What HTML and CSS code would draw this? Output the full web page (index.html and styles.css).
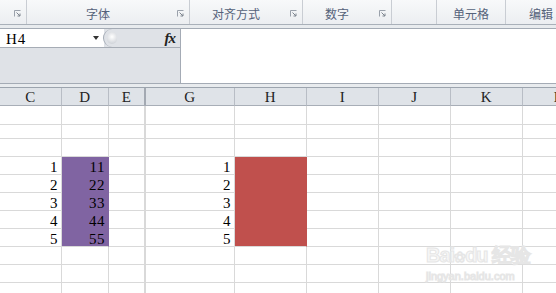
FILE: index.html
```html
<!DOCTYPE html>
<html>
<head>
<meta charset="utf-8">
<link rel="stylesheet" href="styles.css">
</head>
<body>
<div class="ribbon">
  <div class="grp g0"><span class="lbl"></span><span class="launch"><svg width="7" height="7" viewBox="0 0 7 7"><path d="M0.5 6.5V0.5H6.5" fill="none" stroke="#9aa1ab"/><path d="M2.5 2.5L6 6M6 3.5V6H3.5" fill="none" stroke="#7d848e"/></svg></span></div>
  <div class="grp g1"><span class="lbl">字体</span><span class="launch"><svg width="7" height="7" viewBox="0 0 7 7"><path d="M0.5 6.5V0.5H6.5" fill="none" stroke="#9aa1ab"/><path d="M2.5 2.5L6 6M6 3.5V6H3.5" fill="none" stroke="#7d848e"/></svg></span></div>
  <div class="grp g2"><span class="lbl">对齐方式</span><span class="launch"><svg width="7" height="7" viewBox="0 0 7 7"><path d="M0.5 6.5V0.5H6.5" fill="none" stroke="#9aa1ab"/><path d="M2.5 2.5L6 6M6 3.5V6H3.5" fill="none" stroke="#7d848e"/></svg></span></div>
  <div class="grp g3"><span class="lbl">数字</span><span class="launch"><svg width="7" height="7" viewBox="0 0 7 7"><path d="M0.5 6.5V0.5H6.5" fill="none" stroke="#9aa1ab"/><path d="M2.5 2.5L6 6M6 3.5V6H3.5" fill="none" stroke="#7d848e"/></svg></span></div>
  <div class="grp g4"></div>
  <div class="grp g5"><span class="lbl">单元格</span></div>
  <div class="grp g6"><span class="lbl left">编辑</span></div>
</div>
<div class="band"></div>
<div class="fbar">
  <div class="fleft">
    <div class="ntop">
      <div class="namebox"><span class="name">H4</span><span class="arrow"></span></div>
      <div class="pill"><span class="knob"></span><span class="fx">fx</span></div>
    </div>
  </div>
  <div class="finput"></div>
</div>
<div class="band"></div>
<div class="sheet">
  <div class="row hdr"><div>C</div><div>D</div><div>E</div><div>G</div><div>H</div><div>I</div><div>J</div><div>K</div><div>L</div></div>
  <div class="row h19"><div></div><div></div><div></div><div></div><div></div><div></div><div></div><div></div><div></div></div>
  <div class="row h14"><div></div><div></div><div></div><div></div><div></div><div></div><div></div><div></div><div></div></div>
  <div class="row"><div></div><div></div><div></div><div></div><div></div><div></div><div></div><div></div><div></div></div>
  <div class="row"><div>1</div><div class="pur">11</div><div></div><div>1</div><div class="red"></div><div></div><div></div><div></div><div></div></div>
  <div class="row"><div>2</div><div class="pur">22</div><div></div><div>2</div><div class="red"></div><div></div><div></div><div></div><div></div></div>
  <div class="row"><div>3</div><div class="pur">33</div><div></div><div>3</div><div class="red"></div><div></div><div></div><div></div><div></div></div>
  <div class="row"><div>4</div><div class="pur">44</div><div></div><div>4</div><div class="red"></div><div></div><div></div><div></div><div></div></div>
  <div class="row"><div>5</div><div class="pur last">55</div><div></div><div>5</div><div class="red last"></div><div></div><div></div><div></div><div></div></div>
  <div class="row"><div></div><div></div><div></div><div></div><div></div><div></div><div></div><div></div><div></div></div>
  <div class="row"><div></div><div></div><div></div><div></div><div></div><div></div><div></div><div></div><div></div></div>
  <div class="row"><div></div><div></div><div></div><div></div><div></div><div></div><div></div><div></div><div></div></div>
</div>
<div class="watermark"><div class="wm1">Bai<span class="paw">✿</span>du 经验</div><div class="wm2">jingyan.baidu.com</div></div>
</body>
</html>
```
FILE: styles.css
```css
body {
  margin: 0;
  width: 556px;
  height: 293px;
  overflow: hidden;
  background: #fff;
  font-family: "Liberation Serif", "DejaVu Serif", serif;
  position: relative;
}
.ribbon {
  display: flex;
  height: 24px;
  border-bottom: 1px solid #a9b0b9;
  background: linear-gradient(#f8f9fa, #eceef1);
}
.grp {
  display: flex;
  align-items: center;
  border-right: 1px solid #c9cdd3;
  box-sizing: border-box;
  flex: none;
}
.g0 { width: 27px; }
.g1 { width: 163px; }
.g2 { width: 113px; }
.g3 { width: 89px; }
.g4 { width: 45px; }
.g5 { width: 69px; }
.g6 { flex: 1; border-right: none; }
.lbl {
  flex: 1;
  text-align: center;
  font: 12px "Noto Sans CJK SC", sans-serif;
  color: #55627a;
  padding-top: 3px;
  white-space: nowrap;
}
.lbl.left { text-align: left; padding-left: 23px; }
.launch {
  width: 7px;
  height: 7px;
  margin: 2px 5px 0 8px;
  display: flex;
}
.band {
  height: 3px;
  background: #e8ebee;
}
.fbar {
  display: flex;
  height: 54px;
  border-top: 1px solid #a4abb5;
  border-bottom: 1px solid #a4abb5;
}
.fleft {
  width: 180px;
  border-right: 1px solid #a4abb5;
  background: #dfe2e7;
  display: flex;
  flex-direction: column;
}
.ntop {
  display: flex;
  height: 18px;
  border-bottom: 1px solid #a6acb5;
}
.namebox {
  width: 104px;
  background: #fff;
  display: flex;
  align-items: center;
  justify-content: space-between;
}
.name {
  font-size: 15px;
  color: #000;
  padding-left: 6px;
  line-height: 18px;
  padding-top: 1px;
  letter-spacing: 1px;
}
.arrow {
  width: 0;
  height: 0;
  border-left: 3px solid transparent;
  border-right: 3px solid transparent;
  border-top: 4px solid #333;
  margin-right: 5px;
}
.pill {
  flex: 1;
  display: flex;
  align-items: center;
  justify-content: space-between;
  background: #dfe2e7;
  border-left: 1px solid #a4abb5;
  border-radius: 9px 0 0 9px;
  margin-left: -1px;
}
.knob {
  width: 10px;
  height: 12px;
  border-radius: 6px;
  margin-left: 3px;
  background: radial-gradient(circle at 50% 40%, #ffffff, #d6d9de 70%, #c4c8ce);
}
.fx {
  font: italic bold 15px "Liberation Serif", serif;
  color: #222;
  padding-right: 5px;
  letter-spacing: -1px;
}
.finput {
  flex: 1;
  background: #fff;
}
.sheet {
  width: 556px;
  overflow: hidden;
}
.row {
  display: flex;
  height: 18px;
  width: 600px;
}
.row > div {
  flex: none;
  box-sizing: border-box;
  border-right: 1px solid #d9d9d9;
  border-bottom: 1px solid #d9d9d9;
  font-size: 15px;
  line-height: 14px;
  text-align: right;
  padding-right: 3px;
  display: flex;
  align-items: flex-end;
  justify-content: flex-end;
  color: #000;
  letter-spacing: 0.5px;
}
.row > div:nth-child(1) { width: 62px; }
.row > div:nth-child(2) { width: 47px; }
.row > div:nth-child(3) { width: 37px; border-right-width: 2px; }
.row > div:nth-child(4) { width: 89px; }
.row > div:nth-child(5) { width: 72px; }
.row > div:nth-child(6) { width: 72px; }
.row > div:nth-child(7) { width: 72px; }
.row > div:nth-child(8) { width: 72px; }
.row > div:nth-child(9) { width: 72px; }
.row.h19 { height: 19px; }
.row.h14 { height: 14px; }
.row.hdr {
  height: 18px;
  border-top: 1px solid #9ca4ae;
  background: #dfe3e8;
}
.row.hdr > div {
  border-right-color: #b8bdc5;
  border-bottom-color: #a8aeb7;
  justify-content: center;
  align-items: center;
  padding: 1px 0 0 0;
  line-height: 16px;
  color: #222;
}
.row.hdr > div:nth-child(3) { border-right-color: #a3a9b2; }
.row > div.pur {
  background: #8064a2;
  border-right-color: #8064a2;
  border-bottom-color: #8064a2;
}
.row > div.red {
  background: #c0504d;
  border-right-color: #c0504d;
  border-bottom-color: #c0504d;
}
.row > div.last { border-bottom-color: #d9d9d9; }
.watermark {
  position: absolute;
  left: 426px;
  top: 244px;
  color: #f7f7f7;
  -webkit-text-stroke: 1px #e6e6e6;
  font-family: "Liberation Sans", sans-serif;
  font-weight: bold;
}
.wm1 { font-size: 20px; line-height: 22px; letter-spacing: -1px; }
.paw { font-size: 14px; }
.wm2 { font-size: 11px; line-height: 14px; font-weight: normal; margin-top: 1px; }
```
